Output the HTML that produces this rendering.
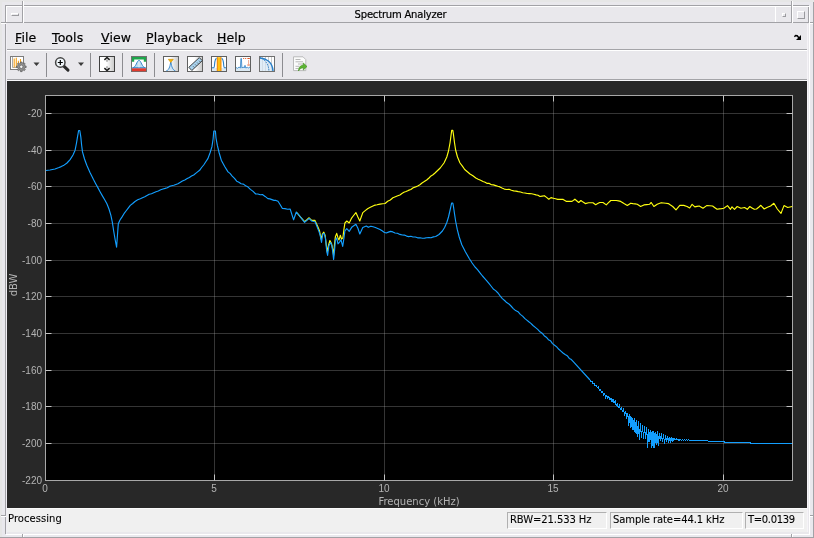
<!DOCTYPE html>
<html>
<head>
<meta charset="utf-8">
<title>Spectrum Analyzer</title>
<style>
html,body{margin:0;padding:0;}
body{width:814px;height:538px;overflow:hidden;background:#e9e8ed;position:relative;
 font-family:"DejaVu Sans","Liberation Sans",sans-serif;color:#000;}
div{position:absolute;box-sizing:border-box;}
.ui{font-family:"DejaVu Sans","Liberation Sans",sans-serif;}
.ui,.menu,.tick,.sbox,#titletext{will-change:transform;}
.menu,#titletext{-webkit-text-stroke:0.2px #000;}
.ui,.sbox{-webkit-text-stroke:0.1px #000;}
#client{left:6px;top:6px;width:803px;height:528px;background:#e9e8ec;}
#title{left:0;top:0;width:803px;height:17px;background:#e9e8ec;}
#titletext{left:0;top:0;width:803px;height:17px;line-height:16px;text-align:center;font-size:10px;letter-spacing:-0.2px;}
.menu{top:28px;font-size:12.5px;letter-spacing:0.1px;line-height:20px;height:20px;white-space:nowrap;}
.menu u{text-decoration:underline;text-decoration-thickness:1px;text-underline-offset:0.5px;}
.hl{background:#fff;}
.sh{background:#a2a2a6;}
#panel{left:7px;top:81px;width:800px;height:427px;background:#282828;}
#axes{left:45px;top:95px;width:748px;height:386px;background:#000;border:1px solid #a8a8a8;}
.tick{font-family:"Liberation Sans",sans-serif;font-size:10px;color:#b4b4b4;line-height:12px;height:12px;white-space:nowrap;}
.yt{left:10px;width:32px;text-align:right;}
.xt{top:483px;width:40px;text-align:center;}
#status{left:7px;top:508px;width:800px;height:24px;background:#f0f0f0;border-top:1px solid #fafafa;}
.sbox{top:512px;height:17px;border:1px solid #b0b0b0;border-right-color:#fff;border-bottom-color:#fff;font-size:10px;line-height:13px;padding-left:2px;white-space:nowrap;letter-spacing:-0.1px;}
</style>
</head>
<body>
<!-- window-manager frame -->
<div id="client"></div>
<div id="title"></div>

<!-- frame lines -->
<div style="left:0;top:0;width:814px;height:2px;background:#e6e6e6;"></div>
<div style="left:0;top:0;width:2px;height:538px;background:#e6e6e6;"></div>
<div class="sh" style="left:0px;top:537px;width:814px;height:1px;"></div>
<div class="sh" style="left:813px;top:2px;width:1px;height:536px;"></div>
<!-- inner bevel -->
<div class="sh" style="left:5px;top:5px;width:804px;height:1px;"></div>
<div class="sh" style="left:5px;top:5px;width:1px;height:529px;"></div>
<div class="hl" style="left:6px;top:6px;width:803px;height:1px;"></div>
<div class="hl" style="left:6px;top:6px;width:1px;height:17px;"></div>
<div style="left:6px;top:23px;width:1px;height:511px;background:#f0eef4;"></div>
<div class="hl" style="left:809px;top:6px;width:1px;height:529px;"></div>
<div class="hl" style="left:6px;top:534px;width:804px;height:1px;"></div>
<!-- title bottom -->
<div class="sh" style="left:6px;top:22px;width:803px;height:1px;"></div>
<!-- title buttons bevels -->
<div class="sh" style="left:22px;top:1px;width:1px;height:22px;"></div>
<div class="hl" style="left:23px;top:1px;width:1px;height:22px;"></div>
<div class="hl" style="left:775px;top:6px;width:1px;height:16px;"></div>
<div class="sh" style="left:791px;top:1px;width:1px;height:22px;"></div>
<div class="hl" style="left:792px;top:1px;width:1px;height:22px;"></div>
<div class="sh" style="left:808px;top:7px;width:1px;height:16px;"></div>
<!-- resize corner marks -->
<div class="sh" style="left:1px;top:22px;width:5px;height:1px;"></div>
<div class="hl" style="left:1px;top:23px;width:5px;height:1px;"></div>
<div class="sh" style="left:810px;top:22px;width:4px;height:1px;"></div>
<div class="hl" style="left:810px;top:23px;width:3px;height:1px;"></div>
<div class="sh" style="left:1px;top:515px;width:5px;height:1px;"></div>
<div class="hl" style="left:1px;top:516px;width:5px;height:1px;"></div>
<div class="sh" style="left:810px;top:515px;width:4px;height:1px;"></div>
<div class="hl" style="left:810px;top:516px;width:3px;height:1px;"></div>
<div class="sh" style="left:22px;top:534px;width:1px;height:4px;"></div>
<div class="hl" style="left:23px;top:534px;width:1px;height:3px;"></div>
<div class="sh" style="left:791px;top:534px;width:1px;height:4px;"></div>
<div class="hl" style="left:792px;top:534px;width:1px;height:3px;"></div>

<!-- title buttons -->
<div style="left:11px;top:13px;width:8px;height:3px;border:1px solid #fff;border-right-color:#9a9a9e;border-bottom-color:#9a9a9e;"></div>
<div style="left:782px;top:13px;width:4px;height:4px;border:1px solid #fff;border-right-color:#9a9a9e;border-bottom-color:#9a9a9e;"></div>
<div style="left:797px;top:11px;width:8px;height:8px;border:1px solid #fff;border-right-color:#9a9a9e;border-bottom-color:#9a9a9e;"></div>

<div id="titletext" style="left:-1px;top:7px;">Spectrum Analyzer</div>

<div style="left:807px;top:24px;width:1px;height:508px;background:#f6f4f8;"></div>
<!-- menu bar -->
<div class="menu" style="left:15px;"><u>F</u>ile</div>
<div class="menu" style="left:52px;"><u>T</u>ools</div>
<div class="menu" style="left:101px;"><u>V</u>iew</div>
<div class="menu" style="left:146px;"><u>P</u>layback</div>
<div class="menu" style="left:217px;"><u>H</u>elp</div>
<svg style="position:absolute;left:790px;top:32px;" width="14" height="10" viewBox="790 32 14 10"><path d="M801,35 V40 H796 Z" fill="#000"/><path d="M794.4,36.7 L795.6,35.5 L797.2,35.7 L799.2,38.2" stroke="#000" stroke-width="1.4" fill="none"/></svg>

<!-- toolbar separators -->
<div class="sh" style="left:7px;top:49px;width:800px;height:1px;background:#a4a4a8;"></div>
<div class="hl" style="left:7px;top:50px;width:800px;height:1px;"></div>
<div class="sh" style="left:7px;top:79px;width:800px;height:1px;background:#a4a4a8;"></div>
<div class="hl" style="left:7px;top:80px;width:800px;height:1px;background:#f8f8fa;"></div>

<svg style="position:absolute;left:0;top:50px;" width="814" height="30" viewBox="0 50 814 30">
<defs>
<linearGradient id="gw" x1="0" y1="0" x2="1" y2="0"><stop offset="0.45" stop-color="#fff"/><stop offset="1" stop-color="#c8c8c8"/></linearGradient>
<linearGradient id="gb" x1="0" y1="0" x2="0" y2="1"><stop offset="0" stop-color="#e8f2fa"/><stop offset="1" stop-color="#9cc4e0"/></linearGradient>
</defs>
<!-- separators -->
<g stroke="#8c8c90" stroke-width="1">
<line x1="46.5" y1="53" x2="46.5" y2="77"/>
<line x1="90.5" y1="53" x2="90.5" y2="77"/>
<line x1="122.5" y1="53" x2="122.5" y2="77"/>
<line x1="154.5" y1="53" x2="154.5" y2="77"/>
<line x1="282.5" y1="53" x2="282.5" y2="77"/>
</g>
<!-- dropdown arrows -->
<path d="M33.5,62.5 h6 l-3,3.5 z M78,62.5 h6 l-3,3.5 z" fill="#3c3c3c"/>

<!-- icon 1: configuration (plot + gear) -->
<rect x="10.500" y="56.500" width="13" height="13" fill="#fff" stroke="#7c7c7c"/>
<path d="M12.500,57 v10.500 h10.500" fill="none" stroke="#a0a0a0" stroke-width="0.9"/>
<g stroke="#f5a21a" stroke-width="1.1">
<line x1="14.200" y1="67.500" x2="14.200" y2="58.500"/><line x1="16.300" y1="67.500" x2="16.300" y2="57.800"/><line x1="18.400" y1="67.500" x2="18.400" y2="60.800"/><line x1="20.500" y1="67.500" x2="20.500" y2="59"/>
</g>
<path d="M26.13,65.96 L26.13,67.64 L24.90,67.66 L24.45,68.73 L25.31,69.62 L24.12,70.81 L23.23,69.95 L22.16,70.40 L22.14,71.63 L20.46,71.63 L20.44,70.40 L19.37,69.95 L18.48,70.81 L17.29,69.62 L18.15,68.73 L17.70,67.66 L16.47,67.64 L16.47,65.96 L17.70,65.94 L18.15,64.87 L17.29,63.98 L18.48,62.79 L19.37,63.65 L20.44,63.20 L20.46,61.97 L22.14,61.97 L22.16,63.20 L23.23,63.65 L24.12,62.79 L25.31,63.98 L24.45,64.87 L24.90,65.94 Z" fill="#909090" stroke="#5c5c5c" stroke-width="0.7"/>
<circle cx="21.300" cy="66.800" r="1.700" fill="#f4f4f4" stroke="#5c5c5c" stroke-width="0.7"/>

<!-- icon 2: zoom -->
<line x1="63.800" y1="66.200" x2="68" y2="70.200" stroke="#2a2a2a" stroke-width="3" stroke-linecap="round"/>
<circle cx="60.300" cy="62.500" r="4.700" fill="#f2f8fc" stroke="#444" stroke-width="1.500"/>
<path d="M57.800,62.500 h5 M60.300,60 v5" stroke="#000" stroke-width="1.200"/>

<!-- icon 3: autoscale -->
<rect x="99.500" y="56.500" width="15" height="15" fill="url(#gw)" stroke="#404040"/>
<path d="M107,59.500 v2.300 M107,68.500 v-2.300" stroke="#9a9a9a" stroke-width="1.400"/>
<path d="M104.400,59.900 L107,57.500 L109.600,59.900 M104.400,68.100 L107,70.500 L109.600,68.100" fill="none" stroke="#1c1c1c" stroke-width="1.500"/>

<!-- icon 4: spectral mask -->
<rect x="131.500" y="56.500" width="15" height="15" fill="#fff" stroke="#707070"/>
<path d="M132,57 h14 v4.800 h-2.200 v-2.300 h-9.600 v2.300 h-2.200 z" fill="#1fa64c"/>
<rect x="132" y="68.200" width="14" height="3" fill="#e23a2e"/>
<path d="M132.500,67.700 C136.200,67.700 136.600,60.500 139,60.500 C141.400,60.500 141.800,67.700 145.500,67.700 Z" fill="#bcdcf0" stroke="#2a7fc8" stroke-width="0.900"/>
<line x1="139" y1="61.200" x2="139" y2="67.500" stroke="#fff" stroke-width="0.700"/>

<!-- icon 5: peak finder -->
<rect x="163.500" y="56.500" width="15" height="15" fill="url(#gw)" stroke="#606060"/>
<path d="M166.300,70.800 C169.800,70 170.200,64 170.800,62 C171.400,64 171.800,70 175.300,70.800" fill="#cfe4f4" stroke="#2a7fc8" stroke-width="0.900"/>
<path d="M168.300,59.300 h5 l-2.500,3.200 z" fill="#f6b800" stroke="#d48a00" stroke-width="0.600"/>

<!-- icon 6: cursor measurements (ruler) -->
<rect x="187.500" y="56.500" width="15" height="15" fill="url(#gw)" stroke="#606060"/>
<path d="M188.800,67.300 L199.300,57.600 L202.300,60.700 L191.800,70.500 Z" fill="#a9d3ee" stroke="#303030" stroke-width="0.9"/>
<path d="M193.200,66.400 l1,1 M195.200,64.500 l1,1 M197.200,62.600 l1,1 M199.200,60.800 l1,1" stroke="#303030" stroke-width="0.8"/>

<!-- icon 7: channel measurements -->
<rect x="211.500" y="56.500" width="15" height="15" fill="#fff" stroke="#606060"/>
<rect x="212" y="68" width="14" height="3" fill="#dce9f2"/>
<rect x="216.900" y="57.200" width="4.400" height="13.800" fill="#ffc20e"/>
<path d="M217.300,57.200 v13.800 M220.900,57.200 v13.800" stroke="#f07d10" stroke-width="0.900"/>
<path d="M212,67.800 h1.800 C215,67.800 214,58.600 216.600,58.400 M221.600,58.400 C224.200,58.600 223.200,67.800 224.400,67.800 h1.600" fill="none" stroke="#2a7fc8" stroke-width="1.100"/>

<!-- icon 8: distortion measurements -->
<rect x="235.500" y="56.500" width="15" height="15" fill="#fff" stroke="#606060"/>
<path d="M236,67.500 L237.500,68.300 L239,67 L240.400,68 L240.900,58.500 L241.400,58.500 L241.900,68 L243.300,67 L244.200,68 L245,65.300 L245.800,68 L247.300,67.300 L248.300,68 L250,67 V71 H236 Z" fill="#dbe9f3" stroke="none"/>
<path d="M236,67.500 L237.500,68.300 L239,67 L240.400,68 L240.900,58.500 L241.400,58.500 L241.900,68 L243.300,67 L244.200,68 L245,65.300 L245.800,68 L247.300,67.300 L248.300,68 L250,67" fill="none" stroke="#2a7fc8" stroke-width="0.800"/>
<path d="M243.200,58.500 h1 M245.200,58.500 h1 M247.400,58.500 h2.400 M248.600,60.500 v1 M248.600,62.500 v1 M247.400,65 h2.400" stroke="#e0501c" stroke-width="1"/>

<!-- icon 9: CCDF -->
<rect x="259.500" y="56.500" width="15" height="15" fill="#fff" stroke="#707070"/>
<path d="M262.500,57 v14 M265.500,57 v14 M268.500,57 v14 M271.500,57 v14" stroke="#c4c4c4" stroke-width="0.9"/>
<path d="M260,58 C266,58.500 272.500,62 273,71 L260,71 Z" fill="#d4e6f4" opacity="0.7"/>
<path d="M260,58 C266,58.500 272.500,62 273,71" fill="none" stroke="#2a7fc8" stroke-width="1.5"/>
<path d="M260,57.500 C264,59 268.500,63 269,71" fill="none" stroke="#2a7fc8" stroke-width="0.9" stroke-dasharray="1.6 0.9"/>

<!-- icon 10: export (document + green arrow) -->
<path d="M293.500,56.800 h9.500 l2.800,2.800 v11 h-12.300 z" fill="#fbfbfb" stroke="#b4b4b4" stroke-width="0.9"/>
<path d="M295.500,59.500 h5 M295.500,61.800 h7.500 M298,64 h5 M295.500,66.300 h4 M295.500,68.500 h3" stroke="#b8b8b8" stroke-width="1"/>
<path d="M298.500,71 C298.500,66.800 301,65.300 303.300,65.300 V63 L307,66.500 L303.300,70 V67.800 C301.500,67.800 300,68.500 298.500,71 Z" fill="#5cb531" stroke="#3c8c1c" stroke-width="0.6"/>
</svg>


<!-- plot panel -->
<div id="panel"></div>
<div id="axes"></div>
<svg style="position:absolute;left:0;top:0;" width="814" height="538" viewBox="0 0 814 538">
<line x1="45.5" y1="113.5" x2="792.5" y2="113.5" stroke="#afafaf" stroke-opacity="0.3" stroke-width="1"/>
<line x1="45.5" y1="113.5" x2="51.5" y2="113.5" stroke="#c4c4c4" stroke-width="1"/>
<line x1="786.5" y1="113.5" x2="792.5" y2="113.5" stroke="#c4c4c4" stroke-width="1"/>
<line x1="45.5" y1="150.5" x2="792.5" y2="150.5" stroke="#afafaf" stroke-opacity="0.3" stroke-width="1"/>
<line x1="45.5" y1="150.5" x2="51.5" y2="150.5" stroke="#c4c4c4" stroke-width="1"/>
<line x1="786.5" y1="150.5" x2="792.5" y2="150.5" stroke="#c4c4c4" stroke-width="1"/>
<line x1="45.5" y1="186.5" x2="792.5" y2="186.5" stroke="#afafaf" stroke-opacity="0.3" stroke-width="1"/>
<line x1="45.5" y1="186.5" x2="51.5" y2="186.5" stroke="#c4c4c4" stroke-width="1"/>
<line x1="786.5" y1="186.5" x2="792.5" y2="186.5" stroke="#c4c4c4" stroke-width="1"/>
<line x1="45.5" y1="223.5" x2="792.5" y2="223.5" stroke="#afafaf" stroke-opacity="0.3" stroke-width="1"/>
<line x1="45.5" y1="223.5" x2="51.5" y2="223.5" stroke="#c4c4c4" stroke-width="1"/>
<line x1="786.5" y1="223.5" x2="792.5" y2="223.5" stroke="#c4c4c4" stroke-width="1"/>
<line x1="45.5" y1="260.5" x2="792.5" y2="260.5" stroke="#afafaf" stroke-opacity="0.3" stroke-width="1"/>
<line x1="45.5" y1="260.5" x2="51.5" y2="260.5" stroke="#c4c4c4" stroke-width="1"/>
<line x1="786.5" y1="260.5" x2="792.5" y2="260.5" stroke="#c4c4c4" stroke-width="1"/>
<line x1="45.5" y1="296.5" x2="792.5" y2="296.5" stroke="#afafaf" stroke-opacity="0.3" stroke-width="1"/>
<line x1="45.5" y1="296.5" x2="51.5" y2="296.5" stroke="#c4c4c4" stroke-width="1"/>
<line x1="786.5" y1="296.5" x2="792.5" y2="296.5" stroke="#c4c4c4" stroke-width="1"/>
<line x1="45.5" y1="333.5" x2="792.5" y2="333.5" stroke="#afafaf" stroke-opacity="0.3" stroke-width="1"/>
<line x1="45.5" y1="333.5" x2="51.5" y2="333.5" stroke="#c4c4c4" stroke-width="1"/>
<line x1="786.5" y1="333.5" x2="792.5" y2="333.5" stroke="#c4c4c4" stroke-width="1"/>
<line x1="45.5" y1="370.5" x2="792.5" y2="370.5" stroke="#afafaf" stroke-opacity="0.3" stroke-width="1"/>
<line x1="45.5" y1="370.5" x2="51.5" y2="370.5" stroke="#c4c4c4" stroke-width="1"/>
<line x1="786.5" y1="370.5" x2="792.5" y2="370.5" stroke="#c4c4c4" stroke-width="1"/>
<line x1="45.5" y1="406.5" x2="792.5" y2="406.5" stroke="#afafaf" stroke-opacity="0.3" stroke-width="1"/>
<line x1="45.5" y1="406.5" x2="51.5" y2="406.5" stroke="#c4c4c4" stroke-width="1"/>
<line x1="786.5" y1="406.5" x2="792.5" y2="406.5" stroke="#c4c4c4" stroke-width="1"/>
<line x1="45.5" y1="443.5" x2="792.5" y2="443.5" stroke="#afafaf" stroke-opacity="0.3" stroke-width="1"/>
<line x1="45.5" y1="443.5" x2="51.5" y2="443.5" stroke="#c4c4c4" stroke-width="1"/>
<line x1="786.5" y1="443.5" x2="792.5" y2="443.5" stroke="#c4c4c4" stroke-width="1"/>
<line x1="214.5" y1="95.5" x2="214.5" y2="480.5" stroke="#afafaf" stroke-opacity="0.3" stroke-width="1"/>
<line x1="214.5" y1="95.5" x2="214.5" y2="101.5" stroke="#c4c4c4" stroke-width="1"/>
<line x1="214.5" y1="474.5" x2="214.5" y2="480.5" stroke="#c4c4c4" stroke-width="1"/>
<line x1="384.5" y1="95.5" x2="384.5" y2="480.5" stroke="#afafaf" stroke-opacity="0.3" stroke-width="1"/>
<line x1="384.5" y1="95.5" x2="384.5" y2="101.5" stroke="#c4c4c4" stroke-width="1"/>
<line x1="384.5" y1="474.5" x2="384.5" y2="480.5" stroke="#c4c4c4" stroke-width="1"/>
<line x1="553.5" y1="95.5" x2="553.5" y2="480.5" stroke="#afafaf" stroke-opacity="0.3" stroke-width="1"/>
<line x1="553.5" y1="95.5" x2="553.5" y2="101.5" stroke="#c4c4c4" stroke-width="1"/>
<line x1="553.5" y1="474.5" x2="553.5" y2="480.5" stroke="#c4c4c4" stroke-width="1"/>
<line x1="723.5" y1="95.5" x2="723.5" y2="480.5" stroke="#afafaf" stroke-opacity="0.3" stroke-width="1"/>
<line x1="723.5" y1="95.5" x2="723.5" y2="101.5" stroke="#c4c4c4" stroke-width="1"/>
<line x1="723.5" y1="474.5" x2="723.5" y2="480.5" stroke="#c4c4c4" stroke-width="1"/>
<path d="M296.3,212.0 L298.3,214.4 L300.3,216.9 L304.6,221.7 L306.9,219.8 L309.1,217.8 L311.7,220.4 L315.0,220.4 L317.6,226.2 L319.5,230.8 L321.2,239.2 L322.4,234.0 L323.8,232.1 L325.1,235.3 L326.4,245.7 L327.3,252.2 L328.4,245.7 L329.9,240.5 L331.6,243.8 L332.8,249.6 L333.6,255.5 L334.5,244.4 L335.4,236.6 L336.7,233.4 L338.0,237.9 L339.0,239.9 L340.3,235.3 L341.6,239.2 L342.9,237.9 L344.0,228.8 L344.9,223.0 L346.8,221.0 L349.2,223.0 L351.4,218.4 L353.6,215.5 L355.9,212.6 L357.9,217.1 L359.8,221.0 L362.8,212.6 L365.2,210.6 L367.6,208.7 L369.8,207.6 L371.9,206.5 L374.1,205.4 L377.1,204.8 L380.0,204.1 L382.6,203.7 L385.1,203.5 L387.7,201.3 L390.3,200.0 L392.9,197.7 L395.4,196.7 L397.8,195.8 L399.9,195.0 L401.9,193.5 L403.9,192.3 L406.0,191.5 L408.4,190.4 L410.8,189.5 L413.2,187.8 L415.6,186.9 L417.7,185.9 L419.9,184.7 L422.0,183.0 L424.3,181.6 L426.7,180.0 L429.0,178.0 L431.0,175.9 L433.0,174.8 L435.0,173.0 L437.6,170.5 L440.2,168.0 L444.0,163.0 L446.8,157.0 L448.5,151.0 L450.0,143.0 L451.2,134.0 L451.7,130.3 L452.8,130.3 L453.4,134.0 L454.4,142.0 L455.6,150.0 L457.5,157.0 L460.0,163.0 L462.4,166.2 L464.7,169.5 L467.4,171.8 L470.0,174.0 L472.9,175.8 L475.8,178.0 L478.2,179.2 L480.6,180.3 L483.0,181.5 L485.1,182.3 L487.2,183.4 L489.3,183.4 L491.4,184.7 L493.5,184.9 L495.6,185.6 L497.8,186.3 L499.9,186.9 L502.0,188.0 L504.3,189.1 L506.7,189.5 L509.0,189.3 L511.4,190.3 L513.7,190.9 L516.0,191.1 L518.2,191.6 L520.5,192.0 L522.7,192.7 L525.0,193.0 L527.2,193.5 L529.4,193.6 L531.6,193.8 L533.8,194.3 L536.0,194.9 L538.0,195.3 L540.0,196.5 L542.2,196.1 L544.4,195.7 L546.6,197.4 L548.8,199.2 L551.0,197.6 L553.2,198.2 L555.5,198.8 L557.7,199.4 L560.5,199.4 L563.2,199.4 L566.5,201.4 L569.2,201.4 L572.0,201.4 L574.9,199.2 L578.7,202.5 L580.9,200.5 L583.1,202.1 L585.3,203.6 L588.6,202.7 L590.8,202.7 L593.0,202.7 L595.7,204.7 L597.7,203.6 L599.7,202.5 L603.0,202.5 L606.3,204.9 L608.5,202.7 L610.8,200.5 L613.5,200.5 L616.3,200.5 L618.5,200.9 L620.7,201.4 L624.0,203.6 L627.3,205.4 L630.7,203.2 L632.9,203.6 L635.1,203.9 L637.3,204.3 L640.6,206.5 L643.9,204.9 L646.7,204.6 L649.5,204.3 L651.2,202.5 L653.9,206.5 L657.2,204.3 L659.2,203.5 L661.2,202.7 L663.6,203.0 L665.9,203.3 L668.3,203.6 L670.5,205.1 L672.7,206.5 L676.0,209.8 L679.8,205.4 L683.7,205.4 L687.1,206.5 L689.7,208.0 L692.1,204.3 L694.8,206.9 L697.0,206.4 L699.2,206.0 L703.0,208.2 L706.7,205.6 L709.7,205.8 L712.6,206.0 L714.9,207.7 L717.1,209.3 L719.3,208.9 L721.6,208.6 L723.8,208.2 L727.5,205.6 L730.5,209.3 L732.0,206.8 L734.5,209.3 L737.2,206.5 L740.9,208.2 L744.6,207.5 L747.3,209.3 L749.8,206.5 L752.0,207.9 L754.3,209.3 L756.5,209.0 L758.7,207.2 L760.9,205.3 L764.2,209.0 L766.9,207.5 L770.6,206.0 L773.9,203.3 L777.3,209.0 L781.0,213.4 L784.0,205.6 L787.7,207.5 L790.0,207.0 L792.2,206.5" fill="none" stroke="#ffff11" stroke-width="1.15" stroke-linejoin="round"/>
<path d="M46.0,170.5 L48.0,170.2 L50.0,170.0 L52.5,169.5 L55.0,169.0 L57.0,168.2 L59.0,167.5 L61.2,166.6 L63.4,165.6 L67.0,163.0 L70.1,159.6 L73.0,155.0 L75.1,150.2 L76.5,143.0 L77.5,136.8 L78.2,133.0 L78.6,130.5 L79.8,130.5 L80.2,133.0 L80.8,136.8 L81.6,145.0 L82.5,151.9 L84.5,159.0 L86.8,165.3 L90.0,172.5 L93.5,179.6 L95.7,183.7 L98.0,187.9 L100.2,192.0 L102.4,195.9 L104.7,199.8 L106.9,203.7 L109.0,209.0 L110.9,215.4 L112.3,222.0 L113.6,230.5 L115.2,240.0 L116.6,247.2 L117.4,236.0 L118.3,223.8 L120.0,220.0 L121.9,217.1 L124.0,213.7 L126.0,211.0 L128.2,208.1 L130.3,205.4 L132.7,203.5 L135.0,201.5 L137.7,199.8 L140.3,198.7 L142.5,197.7 L144.8,196.7 L147.0,195.5 L149.2,194.3 L151.5,193.7 L153.7,192.7 L156.0,191.8 L158.3,191.0 L160.7,189.8 L163.0,189.0 L165.2,188.4 L167.3,187.7 L169.5,186.4 L171.6,185.7 L173.8,185.3 L175.9,184.5 L177.9,183.8 L180.0,182.5 L182.4,181.0 L184.8,179.9 L187.2,178.6 L189.4,177.5 L191.5,176.1 L193.7,175.0 L196.6,172.6 L199.6,170.3 L201.6,167.5 L203.7,165.0 L205.8,161.8 L207.9,158.6 L210.0,153.0 L211.9,146.9 L213.1,139.0 L213.8,131.0 L215.4,131.0 L216.0,138.0 L217.3,145.2 L219.2,153.0 L221.3,160.2 L224.7,166.5 L228.0,171.9 L230.0,173.4 L232.2,176.1 L234.5,178.4 L236.7,181.2 L238.9,182.2 L241.1,183.7 L243.4,184.1 L245.6,185.7 L247.8,186.8 L250.4,189.4 L253.1,191.4 L255.7,194.0 L257.9,194.0 L260.2,194.7 L262.4,194.6 L265.1,196.4 L267.9,198.6 L269.9,198.9 L271.9,199.6 L274.0,200.4 L276.0,200.4 L278.0,201.3 L280.2,204.7 L282.4,208.5 L285.0,208.6 L287.6,209.2 L290.2,209.1 L293.6,219.8 L296.3,212.0 L298.3,214.4 L300.3,216.9 L304.6,222.3 L306.9,220.4 L309.1,218.4 L311.7,221.0 L315.0,221.7 L316.9,226.2 L318.9,231.4 L320.2,235.3 L321.5,242.5 L322.8,234.0 L324.1,233.4 L325.4,237.9 L326.7,250.9 L327.6,255.5 L328.9,245.7 L330.6,242.5 L331.9,245.7 L332.8,252.2 L333.6,259.4 L334.5,250.9 L335.4,240.5 L336.7,237.9 L338.0,243.8 L339.7,241.8 L341.0,239.9 L342.7,246.4 L344.0,237.9 L344.9,230.8 L346.8,228.6 L349.2,231.4 L352.0,226.9 L355.9,224.3 L357.9,228.2 L359.8,234.0 L362.8,227.5 L366.3,226.0 L368.3,227.3 L370.9,226.2 L373.1,226.8 L375.4,227.5 L377.7,228.5 L380.0,229.5 L382.1,230.8 L384.1,232.3 L386.2,233.0 L388.4,232.1 L390.6,231.4 L392.8,231.9 L395.0,233.0 L397.4,233.2 L399.9,234.4 L402.3,235.0 L404.4,235.1 L406.6,236.1 L408.7,236.6 L410.9,236.3 L413.0,237.0 L415.3,237.0 L417.6,237.8 L420.0,237.8 L422.3,238.2 L424.6,238.1 L426.7,237.8 L428.9,237.5 L431.0,237.8 L433.4,236.9 L435.7,236.5 L439.0,234.5 L442.4,231.0 L444.6,227.5 L446.8,222.5 L448.5,217.0 L450.0,210.5 L451.2,205.0 L451.7,203.0 L452.8,203.0 L453.4,206.0 L454.4,213.0 L455.6,221.0 L457.2,229.2 L459.2,237.0 L461.8,244.8 L465.5,252.0 L469.1,258.2 L472.1,263.0 L475.0,267.0 L477.5,269.7 L480.0,272.8 L482.5,276.0 L484.6,278.4 L486.8,280.9 L488.9,283.4 L491.0,286.0 L493.3,289.0 L495.6,290.6 L498.0,293.0 L500.3,296.1 L502.4,298.6 L504.6,300.5 L506.7,302.6 L508.9,303.9 L511.0,306.0 L513.3,308.6 L515.6,310.6 L518.0,311.7 L520.3,314.4 L522.6,316.1 L524.7,318.4 L526.8,320.1 L528.8,321.8 L530.9,323.4 L533.0,325.5 L535.3,327.4 L537.7,329.4 L540.0,331.8 L542.1,333.2 L544.2,335.7 L546.3,337.2 L548.4,339.7 L550.4,340.7 L552.5,343.6 L554.6,345.2 L556.7,346.9 L558.8,349.3 L560.9,351.1 L563.0,353.0 L565.1,354.5 L567.2,355.7 L569.3,358.4 L571.4,359.6 L573.5,361.9 L590.0,380.0" fill="none" stroke="#139fff" stroke-width="1.15" stroke-linejoin="round"/>
<path d="M590.0,380.0 L591.0,381.7 L592.1,381.7 L593.1,383.8 L594.2,383.5 L595.2,386.0 L596.3,385.0 L597.3,387.6 L598.4,386.9 L599.4,390.5 L600.5,389.2 L601.5,392.8 L602.6,391.3 L603.6,395.3 L604.7,393.4 L605.7,398.1 L606.8,395.2 L607.8,398.5 L608.9,396.4 L609.9,400.0 L611.0,397.7 L612.0,402.0 L613.1,399.0 L614.1,402.9 L615.2,400.6 L616.2,405.9 L617.3,403.0 L618.3,408.0 L619.4,405.0 L620.4,409.5 L621.5,407.2 L622.5,411.9 L623.6,409.0 L624.6,415.9 L625.7,411.0 L626.7,418.6 L627.8,413.5 L628.8,425.3 L629.9,414.4 L630.9,427.8 L632.0,417.5 L633.0,429.7 L634.1,418.7 L635.1,433.1 L636.2,420.3 L637.2,436.9 L638.3,421.7 L639.3,439.5 L640.4,423.6 L641.4,437.6 L642.5,425.1 L643.5,438.5 L644.6,426.8 L645.6,438.9 L646.7,427.5 L647.7,447.4 L648.8,429.1 L649.8,442.0 L650.9,430.3 L651.9,447.5 L653.0,430.7 L654.0,447.8 L655.1,431.8 L656.1,444.4 L657.2,431.6 L658.2,445.2 L659.3,433.5 L660.3,440.6 L661.4,433.3 L662.4,441.8 L663.5,434.6 L664.5,443.6 L665.6,435.2 L666.6,441.5 L667.7,436.5 L668.7,442.6 L669.8,437.0 L670.8,442.1 L671.9,437.6 L672.9,441.6 L674.0,438.2 L675.0,440.3 L676.1,438.5 L677.1,440.2 L678.2,438.9 L679.2,440.9 L680.3,439.2 L681.3,440.8 L682.4,439.3 L683.4,440.6 L684.5,439.5 L685.5,440.6 L686.6,439.7 L687.6,440.3 L688.7,439.9 L689.7,440.3 L690.8,440.0 L691.8,440.5 L692.9,440.1 L693.9,440.5 L695.0,440.2 L696.0,440.6 L697.1,440.3 L698.1,440.6 L699.2,440.4 L704.0,440.6 L712.0,441.4 L724.0,441.4 L724.5,442.4 L750.0,442.4 L751.0,443.3 L792.0,443.3" fill="none" stroke="#139fff" stroke-width="1" stroke-linejoin="round" shape-rendering="crispEdges"/>
</svg>
<div class="tick yt" style="top:108px;">-20</div>
<div class="tick yt" style="top:145px;">-40</div>
<div class="tick yt" style="top:181px;">-60</div>
<div class="tick yt" style="top:218px;">-80</div>
<div class="tick yt" style="top:255px;">-100</div>
<div class="tick yt" style="top:291px;">-120</div>
<div class="tick yt" style="top:328px;">-140</div>
<div class="tick yt" style="top:365px;">-160</div>
<div class="tick yt" style="top:401px;">-180</div>
<div class="tick yt" style="top:438px;">-200</div>
<div class="tick yt" style="top:475px;">-220</div>
<div class="tick xt" style="left:25px;">0</div>
<div class="tick xt" style="left:194px;">5</div>
<div class="tick xt" style="left:364px;">10</div>
<div class="tick xt" style="left:533px;">15</div>
<div class="tick xt" style="left:703px;">20</div>
<div class="tick" style="left:378px;top:496px;font-family:'DejaVu Sans','Liberation Sans',sans-serif;width:82px;text-align:center;">Frequency (kHz)</div>
<div class="tick" style="left:-6px;top:279px;width:40px;text-align:center;transform:rotate(-90deg);font-family:'DejaVu Sans','Liberation Sans',sans-serif;">dBW</div>

<!-- status bar -->
<div id="status"></div>
<div class="ui" style="left:8px;top:512px;font-size:10px;line-height:13px;white-space:nowrap;letter-spacing:0.05px;">Processing</div>
<div class="sbox" style="left:507px;width:100px;">RBW=21.533 Hz</div>
<div class="sbox" style="left:610px;width:133px;">Sample rate=44.1 kHz</div>
<div class="sbox" style="left:745px;width:59px;letter-spacing:-0.35px;">T=0.0139</div>
</body>
</html>
